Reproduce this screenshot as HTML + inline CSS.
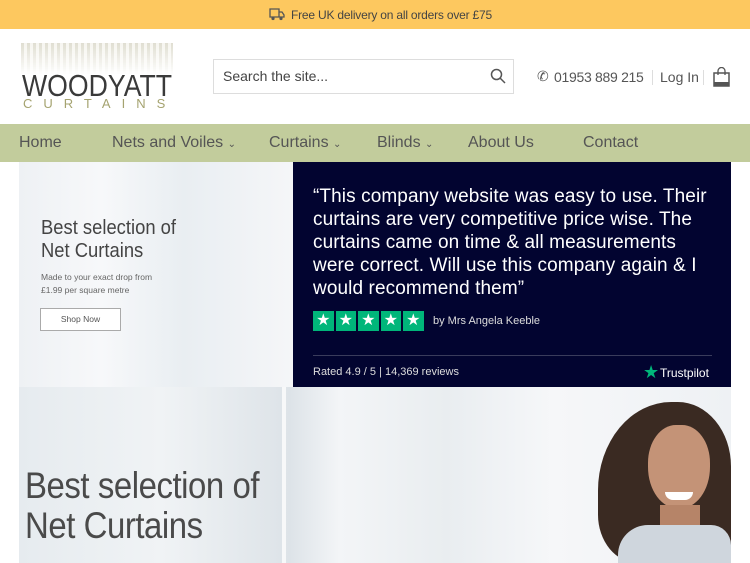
<!DOCTYPE html>
<html><head><meta charset="utf-8"><style>
*{margin:0;padding:0;box-sizing:border-box}
body{width:750px;height:563px;overflow:hidden;background:#fff;font-family:"Liberation Sans",sans-serif;position:relative}
.a{position:absolute}
</style></head><body>
<div class="a" style="left:0;top:0;width:750px;height:29px;background:#fdc85f"></div>
<svg class="a" style="left:269px;top:8px" width="16" height="13" viewBox="0 0 16 13"><path d="M1 1h9v8H1zM10 4h3l2 3v2h-5z" fill="none" stroke="#555" stroke-width="1.3"/><circle cx="4" cy="10.5" r="1.6" fill="#555"/><circle cx="12" cy="10.5" r="1.6" fill="#555"/></svg>
<div class="a" style="left:291px;top:8px;font-size:12px;color:#444;letter-spacing:-0.2px">Free UK delivery on all orders over £75</div>

<!-- logo -->
<div class="a" style="left:21px;top:43px;width:152px;height:32px;background:repeating-linear-gradient(90deg,#d8d6c6 0 3px,#f4f3ec 3px 6px);opacity:.8;-webkit-mask:linear-gradient(#000,transparent)"></div>
<div class="a" style="left:22px;top:70px;font-size:31px;color:#3a3a3a;letter-spacing:0px;transform:scaleX(0.86);transform-origin:left;line-height:31px">WOODYATT</div>
<div class="a" style="left:23px;top:96px;font-size:13px;color:#a5a370;letter-spacing:11px">CURTAINS</div>

<div class="a" style="left:213px;top:59px;width:301px;height:35px;border:1px solid #ddd"></div>
<div class="a" style="left:223px;top:68px;font-size:14px;color:#444">Search the site...</div>
<svg class="a" style="left:490px;top:68px" width="16" height="16" viewBox="0 0 16 16"><circle cx="6.5" cy="6.5" r="5" fill="none" stroke="#555" stroke-width="1.5"/><path d="M10 10l5 5" stroke="#555" stroke-width="1.5"/></svg>
<div class="a" style="left:537px;top:68px;font-size:14px;color:#555">&#9990;</div>
<div class="a" style="left:554px;top:69px;font-size:14px;color:#555;letter-spacing:-0.3px">01953 889 215</div>
<div class="a" style="left:652px;top:70px;width:1px;height:15px;background:#ddd"></div>
<div class="a" style="left:660px;top:69px;font-size:14px;color:#555">Log In</div>
<div class="a" style="left:703px;top:70px;width:1px;height:15px;background:#ddd"></div>
<svg class="a" style="left:712px;top:67px" width="19" height="20" viewBox="0 0 19 20"><path d="M2 6h15v13H2z" fill="none" stroke="#555" stroke-width="1.5"/><path d="M6 8V4a3.5 3.5 0 0 1 7 0v4" fill="none" stroke="#555" stroke-width="1.3"/><rect x="2" y="15" width="15" height="4" fill="#555"/></svg>

<div class="a" style="left:0;top:124px;width:750px;height:38px;background:#c2cc9c"></div>
<div class="a" style="top:134px;left:0;width:750px;font-size:16px;color:#555">
<span class="a" style="left:19px">Home</span>
<span class="a" style="left:112px;white-space:nowrap">Nets and Voiles <small style="font-size:10px">&#8964;</small></span>
<span class="a" style="left:269px;white-space:nowrap">Curtains <small style="font-size:10px">&#8964;</small></span>
<span class="a" style="left:377px;white-space:nowrap">Blinds <small style="font-size:10px">&#8964;</small></span>
<span class="a" style="left:468px;white-space:nowrap">About Us</span>
<span class="a" style="left:583px">Contact</span>
</div>

<!-- left banner -->
<div class="a" style="left:19px;top:162px;width:274px;height:225px;background:linear-gradient(90deg,#eef1f4,#f7f8fa 30%,#e9eef2 60%,#f5f6f8)"></div>
<div class="a" style="left:41px;top:217px;font-size:20px;line-height:23px;color:#444;transform:scaleX(0.92);transform-origin:left">Best selection of<br>Net Curtains</div>
<div class="a" style="left:41px;top:271px;font-size:8.5px;line-height:13px;color:#666">Made to your exact drop from<br>£1.99 per square metre</div>
<div class="a" style="left:40px;top:308px;width:81px;height:23px;border:1px solid #aaa;background:#fff;font-size:8.5px;color:#555;text-align:center;line-height:21px">Shop Now</div>

<!-- trustpilot -->
<div class="a" style="left:293px;top:162px;width:438px;height:225px;background:#020430"></div>
<div class="a" style="left:313px;top:185px;width:410px;font-size:19px;line-height:23px;color:#fff;letter-spacing:0.1px;white-space:nowrap">“This company website was easy to use. Their<br>curtains are very competitive price wise. The<br>curtains came on time &amp; all measurements<br>were correct. Will use this company again &amp; I<br>would recommend them”</div>
<div class="a" style="left:313px;top:311px;display:flex;gap:2px">
<span style="width:20.5px;height:20px;background:#00b67a;color:#fff;font-size:16px;line-height:20px;text-align:center">★</span><span style="width:20.5px;height:20px;background:#00b67a;color:#fff;font-size:16px;line-height:20px;text-align:center">★</span><span style="width:20.5px;height:20px;background:#00b67a;color:#fff;font-size:16px;line-height:20px;text-align:center">★</span><span style="width:20.5px;height:20px;background:#00b67a;color:#fff;font-size:16px;line-height:20px;text-align:center">★</span><span style="width:20.5px;height:20px;background:#00b67a;color:#fff;font-size:16px;line-height:20px;text-align:center">★</span></div>
<div class="a" style="left:433px;top:315px;font-size:11px;color:#ddd">by Mrs Angela Keeble</div>
<div class="a" style="left:313px;top:355px;width:399px;height:1px;background:#3a3c5c"></div>
<div class="a" style="left:313px;top:366px;font-size:11px;color:#ddd">Rated 4.9 / 5 | 14,369 reviews</div>
<div class="a" style="left:643px;top:362px;font-size:18px;color:#00b67a">★</div>
<div class="a" style="left:660px;top:366px;font-size:12px;color:#fff">Trustpilot</div>

<!-- bottom banner -->
<div class="a" style="left:19px;top:387px;width:712px;height:176px;background:linear-gradient(90deg,#e6ebef,#f0f3f5 20%,#dde3e8 38%,#f3f5f7 45%,#e9edf0 60%,#f6f7f9 75%,#eef1f4)"></div>
<div class="a" style="left:282px;top:387px;width:4px;height:176px;background:#f7f8f9"></div>
<div class="a" style="left:25px;top:466px;font-size:37px;line-height:40px;color:#4a4a4a;letter-spacing:-0.5px;transform:scaleX(0.89);transform-origin:left">Best selection of<br>Net Curtains</div>
<!-- woman -->
<div class="a" style="left:598px;top:402px;width:133px;height:161px;background:#3a2a22;border-radius:55% 40% 0 30%"></div>
<div class="a" style="left:648px;top:425px;width:62px;height:84px;background:#c49377;border-radius:45% 45% 50% 50%"></div>
<div class="a" style="left:665px;top:492px;width:28px;height:8px;background:#fff;border-radius:0 0 12px 12px"></div>
<div class="a" style="left:660px;top:505px;width:40px;height:30px;background:#b68468"></div>
<div class="a" style="left:618px;top:525px;width:113px;height:38px;background:#cfd6dd;border-radius:30px 20px 0 0"></div>
</body></html>
